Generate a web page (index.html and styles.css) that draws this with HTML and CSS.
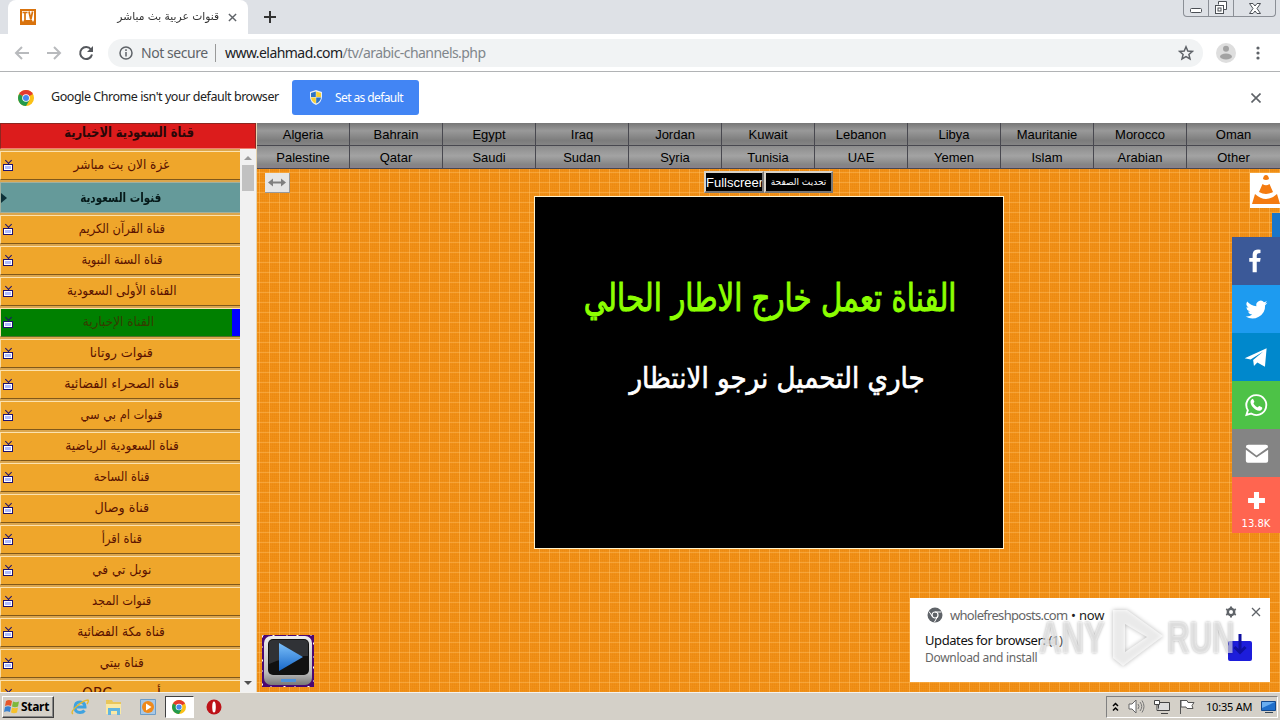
FILE: index.html
```html
<!DOCTYPE html>
<html lang="en">
<head>
	<meta charset="UTF-8">
	<title>قنوات عربية بث مباشر</title>
	<link rel="stylesheet" href="styles.css">
</head>
<body>
<div class="tabs">
	<div class="tab">
		<svg class="fav" viewBox="0 0 16 16"><path fill="#d9730d" d="M0 0h16v16H0z"/><path fill="#fff" d="M2 2h12v9l-1 2-1-2H4l-1 2-1-2z"/><path fill="none" stroke="#d9730d" stroke-width="1.700" d="M2.500 3.500h5M5 3.500V11M9 2.500l1.800 8 1.800-8"/></svg>
		<span class="tab-title" dir="rtl">قنوات عربية بث مباشر</span>
		<svg class="tab-close" viewBox="0 0 10 10"><path d="M1 1l8 8M9 1l-8 8"/></svg>
	</div>
	<svg class="plus" viewBox="0 0 12 12"><path d="M6 0v12M0 6h12"/></svg>
	<div class="win">
		<span><svg width="12" height="6"><rect x=".5" y=".5" width="11" height="4" rx="1"/></svg></span>
		<span><svg width="14" height="14"><path d="M4.500 3.500v-3h8v8h-3"/><rect x="1.500" y="4.500" width="8" height="8"/><rect x="4" y="7" width="3" height="3"/></svg></span>
		<span class="x"><svg width="12" height="11"><path d="M.5 .5h3.500l2 2.500l2-2.500h3.500l-3.500 5l3.500 5h-3.500l-2-2.500l-2 2.500h-3.500l3.500-5z"/></svg></span>
	</div>
</div>
<div class="toolbar">
	<svg class="nav dim" viewBox="0 0 16 16"><path d="M15 8H2M8 2L2 8l6 6"/></svg>
	<svg class="nav dim" viewBox="0 0 16 16"><path d="M1 8h13M8 2l6 6-6 6"/></svg>
	<svg class="nav" viewBox="0 0 16 16"><path d="M13 4.500A6 6 0 1 0 14 9.500"/><path fill="#55585d" stroke="none" d="M15 1v6H9z"/></svg>
	<div class="address">
		<svg class="info" viewBox="0 0 14 14"><circle cx="7" cy="7" r="6"/><path d="M7 6v4.500M7 3.300v1.600"/></svg>
		<span class="secure">Not secure</span>
		<span class="url"><b>www.elahmad.com</b>/tv/arabic-channels.php</span>
		<svg class="star" viewBox="0 0 16 16"><path d="M8 1.800l1.800 4.200 4.600.4-3.500 3 1.100 4.500L8 11.500l-4 2.400 1.100-4.500-3.500-3 4.600-.4z"/></svg>
	</div>
	<svg class="user" viewBox="0 0 20 20"><circle cx="10" cy="10" r="10" fill="#dedede"/><circle cx="10" cy="5.800" r="3" fill="#a3a3a3"/><ellipse cx="10" cy="13.500" rx="6" ry="3" fill="#a3a3a3"/></svg>
	<svg class="dots" viewBox="0 0 4 14"><circle cx="2" cy="2" r="1.600"/><circle cx="2" cy="7" r="1.600"/><circle cx="2" cy="12" r="1.600"/></svg>
</div>
<div class="infobar">
	<svg class="chrome" viewBox="0 0 16 16"><circle cx="8" cy="8" r="8" fill="#fbc116"/><path fill="#e33b2e" d="M8 8L1.100 4A8 8 0 0 1 14.900 4z"/><path fill="#229a4c" d="M8 8L1.100 4A8 8 0 0 0 8 16l3.500-6z"/><circle cx="8" cy="8" r="3.800" fill="#fff"/><circle cx="8" cy="8" r="3" fill="#4688ee"/></svg>
	<span class="info-text">Google Chrome isn't your default browser</span>
	<div class="default-btn">
		<svg width="14" height="15" viewBox="0 0 14 15"><path fill="#e9eef5" d="M7 0l6 2v5q0 5-6 8q-6-3-6-8V2z"/><path fill="#2d73c4" d="M6.800 1.500V7H2V3zM7.200 7.400H12q-.5 4-4.800 6z"/><path fill="#f7d032" d="M7.200 1.500V7H12V3zM6.800 7.400H2q.5 4 4.800 6z"/></svg>
		<span>Set as default</span>
	</div>
	<svg class="info-close" viewBox="0 0 10 10"><path d="M.5 .5l9 9M9.500 .5l-9 9"/></svg>
</div>

<div class="page">
	<div class="side">
		<div class="head" dir="rtl"><span>قناة السعودية الاخبارية</span></div>
		<div class="side-body">
			<ul class="list" dir="rtl">
				<li><span>غزة الان بث مباشر</span></li>
				<li class="group"><span>قنوات السعودية</span></li>
				<li class="tight"><span>قناة القرآن الكريم</span></li>
				<li class="tight"><span>قناة السنة النبوية</span></li>
				<li><span>القناة الأولى السعودية</span></li>
				<li class="on"><span>القناة الإخبارية</span></li>
				<li class="wide"><span>قنوات روتانا</span></li>
				<li class="wide"><span>قناة الصحراء الفضائية</span></li>
				<li class="tight"><span>قنوات ام بي سي</span></li>
				<li><span>قناة السعودية الرياضية</span></li>
				<li class="tight"><span>قناة الساحة</span></li>
				<li class="wide"><span>قناة وصال</span></li>
				<li class="tight"><span>قناة اقرأ</span></li>
				<li><span>نوبل تي في</span></li>
				<li class="tight"><span>قنوات المجد</span></li>
				<li><span>قناة مكة الفضائية</span></li>
				<li><span>قناة بيتي</span></li>
				<li class="last"><span>أوربت - OBC</span></li>
			</ul>
			<div class="scroll">
				<i class="up"></i>
				<div class="thumb"></div>
				<i class="down"></i>
			</div>
		</div>
	</div>
	<div class="main">
		<div class="menu">
			<a>Algeria</a><a>Bahrain</a><a>Egypt</a><a>Iraq</a><a>Jordan</a><a>Kuwait</a><a>Lebanon</a><a>Libya</a><a>Mauritanie</a><a>Morocco</a><a>Oman</a>
			<a>Palestine</a><a>Qatar</a><a>Saudi</a><a>Sudan</a><a>Syria</a><a>Tunisia</a><a>UAE</a><a>Yemen</a><a>Islam</a><a>Arabian</a><a>Other</a>
		</div>
		<div class="resize"><svg width="18" height="9" viewBox="0 0 18 9"><path d="M0 4.500L5 .5v3h8v-3l5 4-5 4v-3H5v3z"/></svg></div>
		<div class="btns">
			<div class="btn full">Fullscreen</div>
			<div class="btn reload" dir="rtl">تحديث الصفحة</div>
		</div>
		<div class="player" dir="rtl">
			<p class="outside"><span>القناة تعمل خارج الاطار الحالي</span></p>
			<p class="loading"><span>جاري التحميل نرجو الانتظار</span></p>
		</div>
		<svg class="play" viewBox="0 0 52 52">
			<defs>
				<linearGradient id="frame" x2="0" y2="1"><stop offset="0" stop-color="#eee"/><stop offset=".75" stop-color="#bbb"/><stop offset="1" stop-color="#777"/></linearGradient>
				<linearGradient id="tri" x2="0" y2="1"><stop offset="0" stop-color="#7cc0fa"/><stop offset="1" stop-color="#1767c9"/></linearGradient>
			</defs>
			<path fill="#4a0872" d="M0 0h52v52H0z"/>
			<path fill="none" stroke="#fff" stroke-dasharray="1 9 2 12" d="M.5 .5h51v51H.5z"/>
			<rect x="2" y="1" width="48" height="49" rx="7" fill="url(#frame)"/>
			<rect x="6" y="4" width="41" height="36" rx="5" fill="#111"/>
			<path fill="#303236" d="M7 8q0-3 4-3h31q4 0 4 3v13Q27 20 7 29z"/>
			<path fill="url(#tri)" d="M17 8l24 14-24 14z"/>
			<path stroke="#4d91d9" stroke-width="3" d="M19 45.500h15"/>
		</svg>
		<div class="vlc"><svg width="30" height="35" viewBox="0 0 30 35"><path fill="#f47b10" d="M16 2q2.500 0 3 4-3 2-6 0 .5-4 3-4zM12.500 11q3.500 2.500 7 0l3.500 8q-7 4-14 0zM5 21q11 10 22 0l3 10H2z"/></svg></div>
		<div class="strip"></div>
		<div class="share">
			<div class="fb"><svg viewBox="0 0 32 32"><path d="M22 5.200V.9Q17 .2 14.500 1.500 11.500 3 11.500 8v4H7v5h4.500v14h5.500V17h4.400l.8-5H17V8.500Q17 5.200 22 5.200z"/></svg></div>
			<div class="tw"><svg viewBox="0 0 32 32"><path d="M28 8.600a10 10 0 0 1-2.800.8 5 5 0 0 0 2.200-2.700c-1 .6-2 1-3.100 1.200a4.900 4.900 0 0 0-8.400 4.500C11.800 12.200 8.200 10.200 5.700 7.200a4.900 4.900 0 0 0 1.500 6.600c-.8 0-1.600-.2-2.200-.6v.1a4.900 4.900 0 0 0 3.900 4.800 5 5 0 0 1-2.200.1 4.900 4.900 0 0 0 4.600 3.400A10 10 0 0 1 4 23.600a14 14 0 0 0 21.500-12.400A10 10 0 0 0 28 8.600z"/></svg></div>
			<div class="tg"><svg viewBox="0 0 32 32"><path d="M2 17L28 5l-2 22-9-5-4 4-1-7L24 9 9 18.500z"/></svg></div>
			<div class="wa"><svg viewBox="0 0 32 32"><path d="M16.200 5.500A10.600 10.600 0 0 0 7.300 21.700L5.800 26.500l5-1.400A10.600 10.600 0 1 0 16.200 5.500z" fill="none" stroke="#fff" stroke-width="2"/><path d="M12 9.500c-3 1.500-2 5.500.5 8.500 3 3.500 7.500 6 9.800 2.500.8-1.500.4-2-.6-2.500l-2.200-1c-1 .3-1.200 1.800-2.200 1.300-1.800-.7-3.300-2.300-4-3.800 0-.8 1.200-1.200.9-2.200l-1-2.300q-.5-.7-1.200-.5z"/></svg></div>
			<div class="mail"><svg viewBox="0 0 32 32"><path d="M5 9.500q0-2.500 2.500-2.500h18q2.500 0 2.500 2.500L16 18zM5 12l11 8 12-8v11.500q0 2-2 2H7q-2 0-2-2z"/></svg></div>
			<div class="more"><svg viewBox="0 0 32 32"><path d="M13 6h6v7h7v6h-7v7h-6v-7H6v-6h7z"/></svg><em>13.8K</em></div>
		</div>
		<div class="toast">
			<div class="toast-text">
				<div class="from">
					<svg width="16" height="16" viewBox="0 0 16 16"><circle cx="8" cy="8" r="7.500" fill="#5f6368"/><circle cx="8" cy="8" r="3" fill="none" stroke="#fff" stroke-width="1.200"/><path stroke="#fff" d="M8 5h6.500M5.400 9.500L2 4.500M10.600 9.500L7.500 15"/></svg>
					<span>wholefreshposts.com <b>• now</b></span>
				</div>
				<div class="t1">Updates for browser: <span>(1)</span></div>
				<div class="t2">Download and install</div>
			</div>
			<div class="toast-icons">
				<svg width="12" height="12" viewBox="0 0 12 12"><circle cx="6" cy="6" r="3.200" fill="none" stroke="#5f6368" stroke-width="2.400"/><path stroke="#5f6368" stroke-width="2" d="M6 .5v1.500M6 10v1.500M1.200 3.200l1.400.8M9.400 8l1.400.8M1.200 8.800L2.600 8M9.400 4l1.400-.8"/></svg>
				<svg width="10" height="10" viewBox="0 0 10 10"><path stroke="#5f6368" stroke-width="1.300" d="M1 1l8 8M9 1L1 9"/></svg>
			</div>
			<svg class="download" width="24" height="28" viewBox="0 0 24 28"><rect y="7" width="24" height="20" rx="2" fill="#1d1ddb"/><path stroke="#0f0fa0" stroke-width="3" fill="none" d="M12 0v18M6.500 13l5.500 5.500L17.500 13"/></svg>
			<div class="mark">
				<span>ANY</span>
				<svg width="58" height="64" viewBox="0 0 58 64"><path d="M4 4v48l10 8 40-30L18 4zM16 18v28l22-15z"/></svg>
				<span>RUN</span>
			</div>
		</div>
	</div>
</div>

<div class="taskbar">
	<div class="start">
		<svg width="16" height="15" viewBox="0 0 16 15"><path fill="#e8572a" d="M2 2q3-2 6 0L7 7Q4 5.500 1 7z"/><path fill="#7db83a" d="M9 2.500q3 1.500 6 0L14 7.500q-3 1.500-6 0z"/><path fill="#3b82cf" d="M1 8q3-1.500 6 0l-1 5q-3-1.500-6 0z"/><path fill="#f6c12b" d="M8 8.500q3 1.500 6 0l-1 5q-3 1.500-6 0z"/></svg>
		<b>Start</b>
	</div>
	<div class="quick">
		<svg width="18" height="18" viewBox="0 0 18 18"><path fill="none" stroke="#3fa3e0" stroke-width="3" d="M4 9h10q0-5-5-5t-5 5.500q0 5 5 5 3 0 4.500-2"/><path fill="none" stroke="#e5b931" stroke-width="1.400" d="M2 16q-3-2 4-8T17 2q1 1-1 4"/></svg>
		<svg width="18" height="18" viewBox="0 0 18 18"><path fill="#e8c65c" d="M1 2h6l1 2h8v12H1z"/><path fill="#fae9a4" d="M1 6h15v10H1z"/><path fill="#62b5df" d="M3 10h12v7h-3v-4H6v4H3z"/></svg>
		<svg width="18" height="18" viewBox="0 0 18 18"><path fill="#a8c8e6" stroke="#6d9dc7" d="M1.500 1.500h15v15h-15z"/><circle cx="9" cy="9" r="6" fill="#f08a1b"/><path fill="#fff" d="M7 5.500l5.500 3.500L7 12.500z"/></svg>
		<div class="active"><svg width="14" height="14" viewBox="0 0 16 16"><circle cx="8" cy="8" r="8" fill="#fbc116"/><path fill="#e33b2e" d="M8 8L1.100 4A8 8 0 0 1 14.900 4z"/><path fill="#229a4c" d="M8 8L1.100 4A8 8 0 0 0 8 16l3.500-6z"/><circle cx="8" cy="8" r="3.800" fill="#fff"/><circle cx="8" cy="8" r="3" fill="#4688ee"/></svg></div>
		<svg width="16" height="16" viewBox="0 0 16 16"><circle cx="8" cy="8" r="7.500" fill="#bd1218"/><ellipse cx="8" cy="8" rx="1.800" ry="5.500" fill="#fff"/></svg>
	</div>
	<div class="tray">
		<svg width="7" height="10" viewBox="0 0 7 10"><path fill="none" stroke="#000" stroke-width="1.500" d="M1 4l2.500-2.500L6 4M1 8.500L3.500 6 6 8.500"/></svg>
		<svg width="17" height="15" viewBox="0 0 17 15"><path fill="#fff" stroke="#666" d="M1 5h3l4-4v13l-4-4H1z"/><path fill="none" stroke="#777" d="M10 5q2 2.500 0 5M12 3q3.500 4.500 0 9M14 1.500q4 6 0 12"/></svg>
		<svg width="16" height="15" viewBox="0 0 16 15"><path fill="#ddd" stroke="#444" d="M4.500 3.500h11v8h-11zM7 14.500h7"/><path fill="#fff" stroke="#444" d="M.5 1.500h5v4h-5zM3 5.500v6h2"/></svg>
		<svg width="16" height="16" viewBox="0 0 16 16"><path fill="#fff" stroke="#555" d="M1.500 1v14M2 1.500h6l1 2h6l-2 3 1 3H8l-1-1.500H2z"/></svg>
		<span class="clock">10:35 AM</span>
		<svg class="desk" width="15" height="12" viewBox="0 0 15 12"><path fill="#1f6fca" stroke="#12488c" d="M.5 .5h14v9H.5z"/><path fill="#69aef0" d="M1 1h13L1 7z"/><path stroke="#345" d="M4 11.500h8"/></svg>
	</div>
</div>
</body>
</html>
```
FILE: styles.css
```css
body,ul,li,p{margin:0;padding:0}
body{width:1280px;height:720px;overflow:hidden;display:flex;flex-direction:column;background:#fff;font:13px/16px "DejaVu Sans",sans-serif;color:#222;}
ul{list-style:none}
svg{display:block;flex:none}
b{font-weight:normal}
span{white-space:nowrap}

/* browser */
.tabs{height:34px;flex:none;display:flex;background:#dee1e6;padding-left:8px;}
.tab{width:240px;box-sizing:border-box;background:#fff;border-radius:8px 8px 0 0;display:flex;align-items:center;padding:0 11px 0 12px;}
.fav{width:16px;height:16px;}
.tab-title{flex:1;font-size:11px;color:#333;margin-right:9px;transform:scaleX(.97);transform-origin:100% 50%;}
.tab-close{width:9px;height:9px;}
.tab-close path,.plus path,.info-close path{stroke:#5f6368;stroke-width:1.6;fill:none;}
.plus{width:12px;height:12px;margin:11px 0 0 16px;}
.plus path{stroke:#333;stroke-width:2;}
.win{margin-left:auto;margin-right:4px;width:93px;height:17px;box-sizing:border-box;border:1px solid #8b8f96;border-top:0;border-radius:0 0 4px 4px;display:flex;}
.win span{width:24px;border-right:1px solid #8b8f96;display:flex;align-items:center;justify-content:center;}
.win span.x{flex:1;border:0;}
.win svg{fill:#fff;stroke:#4b4f55;}
.win span:first-child svg{margin-top:5px;}
.toolbar{height:37px;flex:none;display:flex;align-items:center;padding-left:14px;border-bottom:1px solid #b1b3b5;}
.nav{width:16px;height:16px;margin-right:16px;fill:none;stroke:#55585d;stroke-width:2;}
.dim{stroke:#b8babd;}
.address{width:1095px;height:28px;margin-left:-2px;border-radius:14px;background:#f1f3f4;display:flex;align-items:center;}
.info{width:14px;height:14px;margin-left:11px;fill:none;stroke:#5f6368;stroke-width:1.5;}
.secure{font:14px/18px "Noto Sans",sans-serif;letter-spacing:-.45px;color:#5f6368;width:74px;margin-left:8px;border-right:1px solid #999;}
.url{font:14px/18px "Noto Sans",sans-serif;letter-spacing:-.55px;color:#80868b;margin-left:9px;width:262px;}
.url b{color:#202124;}
.star{width:16px;height:16px;margin-left:auto;margin-right:9px;fill:none;stroke:#5f6368;stroke-width:1.5;}
.user{width:20px;height:20px;margin-left:13px;}
.dots{width:4px;height:14px;margin-left:20px;fill:#5f6368;}
.infobar{height:51px;flex:none;display:flex;align-items:center;padding:0 19px 0 18px;}
.chrome{width:16px;height:16px;}
.info-text{font:12.5px/18px "Noto Sans",sans-serif;letter-spacing:-.45px;margin:-2px 0 0 17px;width:241px;}
.default-btn{width:127px;height:35px;box-sizing:border-box;padding-left:17px;background:#4285f4;border-radius:3px;display:flex;align-items:center;gap:12px;color:#fff;font:12px/16px "Noto Sans",sans-serif;letter-spacing:-.6px;}
.info-close{width:10px;height:10px;margin-left:auto;}

/* channels */
.page{flex:1;min-height:0;display:flex;}
.side{width:256px;border-right:1px solid #e8d5b0;height:569px;display:flex;flex-direction:column;}
.head{height:26px;flex:none;box-sizing:border-box;border:1px solid #8d2620;border-bottom-color:#ef8070;background:#dc1c1c;text-align:center;font-size:14px;font-weight:bold;line-height:17px;color:#2a0808;}
.head span{display:inline-block;transform:translateX(1px) scaleX(.82);}
.side-body{flex:1;min-height:0;display:flex;}
.list{width:240px;padding-top:2px;background:#dba64e;overflow:hidden;}
.list li{height:29px;box-sizing:border-box;margin-bottom:2px;border-top:1px solid #fce2ae;border-left:1px solid #f7dca6;border-bottom:1px solid #80581a;background:#efa62b;text-align:center;line-height:26px;color:#5a1200;position:relative;}
.list li:before{content:"";position:absolute;left:2px;top:12px;width:8px;height:5px;border:1px solid #1c1070;background:#aebcff;box-shadow:inset 0 0 0 1px #fff;}
.list li:after{content:"";position:absolute;left:5px;top:6px;width:4px;height:4px;border:solid #1c1070;border-width:0 1px 1px 0;transform:rotate(45deg);}
.list span{display:inline-block;transform:translateX(1px) scaleX(.93);}
.list .tight span{transform:translateX(1px) scaleX(.88);}
.list .wide span{transform:translateX(1px) scaleX(.98);}
.list .group{height:31px;background:#659a9a;color:#061a1a;font-weight:bold;border-color:#a0b0a0;line-height:30px;}
.list .group span{transform:scaleX(.8);}
.list .group:before{left:0;top:10px;width:0;height:0;border:solid transparent;border-width:5px 0 5px 6px;border-left-color:#0c3038;background:none;box-shadow:none;}
.list .group:after{display:none;}
.list .on{background:linear-gradient(90deg,#008000 231px,#00f 231px);border-bottom-color:#567028;color:#343c00;padding-right:7px;}
.list .last{font-size:15px;}
.scroll{width:16px;background:#f1f1f1;display:flex;flex-direction:column;align-items:center;padding-top:7px;box-sizing:border-box;}
.up,.down{border:4px solid transparent;border-top:0;border-bottom:4px solid #999;}
.thumb{width:12px;height:26px;margin-top:5px;background:#c1c1c1;}
.down{border-top:4px solid #505050;border-bottom:0;margin-top:auto;margin-bottom:7px;}

.main{flex:1;position:relative;background:
	repeating-linear-gradient(90deg,#ffc36a70 0 1px,transparent 1px 10px) 2px 0,
	repeating-linear-gradient(#ffc36a70 0 1px,transparent 1px 10px) 0 9px,
	repeating-linear-gradient(90deg,#ffa52c28 0 1px,transparent 1px 2px),
	repeating-linear-gradient(#ffa52c28 0 1px,transparent 1px 2px),#ec8a12;}
.menu{display:grid;grid-template-columns:repeat(11,93px);grid-auto-rows:23px;font:13px/23px "Liberation Sans",sans-serif;text-align:center;color:#000;}
.menu a{box-sizing:border-box;border-right:1px solid #48484f;border-bottom:1px solid #48484f;background:linear-gradient(#8c8c8c,#a3a3a3 45%,#858585 85%,#88808c);}
.menu a:nth-child(-n+11){background:linear-gradient(#777,#999 35%,#7c7c7c 80%,#858585);}
.menu a:nth-child(11n){border-right:0;}
.resize{position:absolute;left:8px;top:50px;width:24px;height:19px;background:#e6e6e6;border-right:1px solid #999;border-bottom:1px solid #999;display:flex;align-items:center;justify-content:center;fill:#808080;}
.btns{width:129px;margin:2px 0 0 447px;display:flex;}
.btn{height:22px;box-sizing:border-box;border:2px solid #d8d2c8;border-right-color:#777;border-bottom-color:#777;background:#000;color:#fff;overflow:hidden;white-space:nowrap;text-align:center;}
.full{width:60px;font:13px/19px "Liberation Sans",sans-serif;text-align:left;}
.reload{width:69px;font-size:9px;line-height:18px;}
.player{width:468px;height:351px;margin:3px 0 0 277px;border:1px solid #fff2cc;background:#000;text-align:center;overflow:hidden;}
.player p{display:flex;justify-content:center;}
.outside{margin-top:71px;color:#8cff00;font-size:38px;line-height:60px;-webkit-text-stroke:1px #8cff00;}
.outside span{transform:translateX(1px) scaleX(.77);}
.loading{margin-top:25px;color:#fff;font-size:29px;line-height:50px;-webkit-text-stroke:.7px #fff;}
.loading span{transform:translateX(8px) scaleX(.9);}
.play{position:absolute;left:5px;top:512px;width:52px;height:52px;}
.vlc{position:absolute;right:0;top:50px;width:30px;height:35px;background:#fff;}
.strip{position:absolute;right:0;top:90px;width:8px;height:24px;background:#1976c9;}
.share{position:absolute;right:0;top:114px;width:48px;}
.share div{height:48px;display:flex;flex-direction:column;align-items:center;justify-content:center;}
.share svg{width:32px;height:32px;fill:#fff;}
.share .fb{background:#3b5998;}
.share .fb svg{width:24px;height:24px;}
.share .tw{background:#1d9bf0;}
.share .tw svg{width:29px;height:29px;}
.share .tg{background:#0088cc;}
.share .tg svg{width:27px;height:27px;}
.share .wa{background:#4dc247;}
.share .wa svg{width:30px;height:30px;}
.share .mail{background:#848484;}
.share .mail svg{width:31px;height:31px;}
.share .more{background:#ff6550;height:56px;}
.share .more svg{width:27px;height:27px;margin-top:7px;}
.share em{font:10px/12px "DejaVu Sans",sans-serif;color:#fff;margin-top:4px;}

.toast{position:absolute;left:653px;top:475px;width:360px;height:84px;background:#fff;font-family:"Noto Sans",sans-serif;}
.toast-text{padding:9px 0 0 15px;}
.from{display:flex;align-items:center;gap:7px;margin-left:2px;color:#666;letter-spacing:-.7px;}
.from b{color:#222;margin-left:1px;letter-spacing:-.2px;}
.t1{margin-top:9px;line-height:17px;letter-spacing:-.42px;color:#111;}
.t1 span{color:#555;}
.t2{line-height:17px;font-size:12px;letter-spacing:-.3px;color:#666;}
.toast-icons{position:absolute;right:9px;top:8px;display:flex;align-items:center;gap:14px;}
.download{position:absolute;left:318px;top:36px;}
.mark{position:absolute;left:129px;top:8px;display:flex;align-items:center;font:bold 44px/60px "Liberation Sans",sans-serif;color:#ffffff90;text-shadow:0 0 3px #0005;}
.mark span{transform:scaleX(.71);transform-origin:0 50%;width:70px;}
.mark svg{fill:#ffffffb0;fill-rule:evenodd;filter:drop-shadow(0 0 2px #0006);}

/* taskbar */
.taskbar{height:28px;flex:none;box-sizing:border-box;border-top:1px solid #f4f2ee;background:#d4d0c8;display:flex;align-items:center;padding:0 2px;}
.start{width:52px;height:22px;box-sizing:border-box;border:1px solid #fff;border-right-color:#404040;border-bottom-color:#404040;box-shadow:inset -1px -1px #888;display:flex;align-items:center;gap:1px;padding-left:1px;color:#000;}
.start b{font:bold 12px/16px "Noto Sans",sans-serif;letter-spacing:-.3px;}
.quick{display:flex;align-items:center;margin-left:17px;}
.quick svg{margin-right:16px;}
.active{width:29px;height:22px;box-sizing:border-box;border:1px solid #404040;border-right-color:#fff;border-bottom-color:#fff;background:#fff;margin:0 12px 0 -8px;display:flex;align-items:center;justify-content:center;}
.quick .active svg{margin:0 2px 0 0;}
.tray{margin-left:auto;width:172px;height:22px;box-sizing:border-box;border:1px solid #808080;border-right-color:#fff;border-bottom-color:#fff;display:flex;align-items:center;padding-left:5px;}
.tray svg{margin-right:9px;}
.tray .desk{margin:0 1px 0 auto;}
.clock{font:11px/16px "Noto Sans",sans-serif;letter-spacing:-.2px;color:#000;margin-left:2px;}
```
